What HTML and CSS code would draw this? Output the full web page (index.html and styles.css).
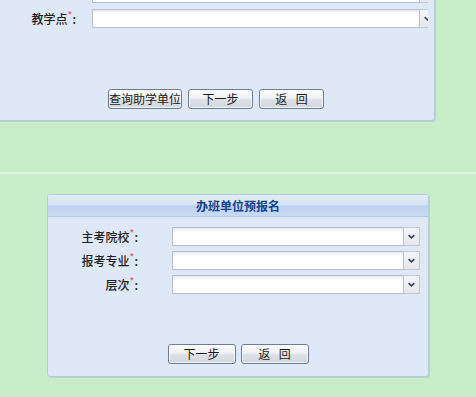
FILE: index.html
```html
<!DOCTYPE html>
<html lang="zh-CN">
<head>
<meta charset="utf-8">
<title>办班单位预报名</title>
<link rel="stylesheet" href="styles.css">
</head>
<body>
<div class="panel panel-top">
  <div class="rows rows-top">
    <div class="row">
      <div class="label"></div>
      <div class="select">
        <div class="field"></div>
        <div class="drop-clip"><div class="drop"><svg width="16" height="17" viewBox="0 0 16 17"><polyline points="5,7 8,10 11,7" fill="none" stroke="#3b4660" stroke-width="1.8"/></svg></div></div>
      </div>
    </div>
    <div class="row">
      <div class="label">教学点<span class="req">*</span>:</div>
      <div class="select">
        <div class="field"></div>
        <div class="drop-clip"><div class="drop"><svg width="16" height="17" viewBox="0 0 16 17"><polyline points="5,7 8,10 11,7" fill="none" stroke="#3b4660" stroke-width="1.8"/></svg></div></div>
      </div>
    </div>
  </div>
  <div class="buttons buttons-top">
    <button class="btn btn-wide">查询助学单位</button>
    <button class="btn">下一步</button>
    <button class="btn btn-back">返 回</button>
  </div>
</div>

<div class="divider"></div>

<div class="panel panel-bottom">
  <div class="header">办班单位预报名</div>
  <div class="rows rows-bottom">
    <div class="row">
      <div class="label">主考院校<span class="req">*</span>:</div>
      <div class="select">
        <div class="field"></div>
        <div class="drop"><svg width="16" height="17" viewBox="0 0 16 17"><polyline points="5,7 8,10 11,7" fill="none" stroke="#3b4660" stroke-width="1.8"/></svg></div>
      </div>
    </div>
    <div class="row">
      <div class="label">报考专业<span class="req">*</span>:</div>
      <div class="select">
        <div class="field"></div>
        <div class="drop"><svg width="16" height="17" viewBox="0 0 16 17"><polyline points="5,7 8,10 11,7" fill="none" stroke="#3b4660" stroke-width="1.8"/></svg></div>
      </div>
    </div>
    <div class="row">
      <div class="label">层次<span class="req">*</span>:</div>
      <div class="select">
        <div class="field"></div>
        <div class="drop"><svg width="16" height="17" viewBox="0 0 16 17"><polyline points="5,7 8,10 11,7" fill="none" stroke="#3b4660" stroke-width="1.8"/></svg></div>
      </div>
    </div>
  </div>
  <div class="buttons buttons-bottom">
    <button class="btn">下一步</button>
    <button class="btn btn-back">返 回</button>
  </div>
</div>
</body>
</html>
```

FILE: styles.css
```css
html, body {
  margin: 0;
  padding: 0;
}
body {
  width: 476px;
  height: 397px;
  overflow: hidden;
  background: #c8eec9;
  font-family: "Noto Sans CJK SC", "Noto Sans", sans-serif;
  font-size: 12px;
  color: #222;
}
.panel {
  box-sizing: border-box;
  background: #dfe8f6;
  border: 1px solid #b7c9e2;
  border-radius: 3px;
  box-shadow: 1px 1px 0 rgba(150, 170, 190, 0.35);
}
.panel-top {
  margin-left: -3px;
  margin-top: -24px;
  width: 438px;
  padding: 7px 6px 11px 0;
}
.rows {
  display: flex;
  flex-direction: column;
  gap: 6px;
}
.row {
  display: flex;
  align-items: center;
  height: 19px;
}
.label {
  text-align: right;
  white-space: nowrap;
  line-height: 19px;
  color: #1e1e1e;
  font-weight: 500;
}
.rows-top .label {
  width: 78px;
  margin-right: 16px;
}
.req {
  color: #e8606a;
  font-size: 10px;
  vertical-align: top;
  line-height: 12px;
}
.select {
  flex: 1;
  display: flex;
  height: 19px;
}
.field {
  flex: 1;
  box-sizing: border-box;
  height: 19px;
  border: 1px solid #b9bfcc;
  background: linear-gradient(#e6e9ef 0, #ffffff 4px);
}
.drop-clip {
  width: 8px;
  height: 19px;
  overflow: hidden;
}
.drop {
  box-sizing: border-box;
  width: 16px;
  height: 19px;
  border: 1px solid #c3c8d3;
  border-left: none;
  background: linear-gradient(#f4f5f8, #e4e7ed);
  display: flex;
  align-items: center;
  justify-content: center;
}
.drop svg {
  display: block;
}
.buttons {
  display: flex;
  justify-content: center;
  gap: 6px;
}
.buttons-top {
  margin-top: 61px;
  padding-left: 6px;
}
.btn {
  box-sizing: border-box;
  height: 20px;
  width: 65px;
  padding: 0;
  border: 1px solid #6c7d98;
  border-radius: 3px;
  background: linear-gradient(#fefefe 0, #eef0f3 45%, #dde1e7 55%, #d2d6de 100%);
  box-shadow: inset 0 0 0 1px rgba(255,255,255,0.7);
  font-family: "Noto Sans CJK SC", "Noto Sans", sans-serif;
  font-size: 12px;
  line-height: 18px;
  color: #1a1a1a;
}
.btn-back {
  word-spacing: 6px;
}
.btn-wide {
  width: 74px;
}
.divider {
  margin-top: 51px;
  height: 2px;
  background: #dff4df;
}
.panel-bottom {
  margin-top: 20px;
  margin-left: 47px;
  width: 382px;
  padding: 0 8px 12px 0;
}
.header {
  margin-right: -8px;
  height: 21px;
  border-bottom: 1px solid #b4c9ea;
  border-radius: 2px 2px 0 0;
  background: linear-gradient(#e3ecf9 0, #d4e1f5 48%, #bed2f1 52%, #c8d9f3 100%);
  text-align: center;
  font-weight: bold;
  font-size: 12px;
  line-height: 21px;
  color: #15428b;
}
.rows-bottom {
  margin-top: 10px;
  gap: 5px;
}
.rows-bottom .label {
  width: 90px;
  margin-right: 34px;
}
.buttons-bottom {
  margin-top: 50px;
  padding-left: 8px;
  gap: 5px;
}
.buttons-bottom .btn {
  width: 68px;
}
```
